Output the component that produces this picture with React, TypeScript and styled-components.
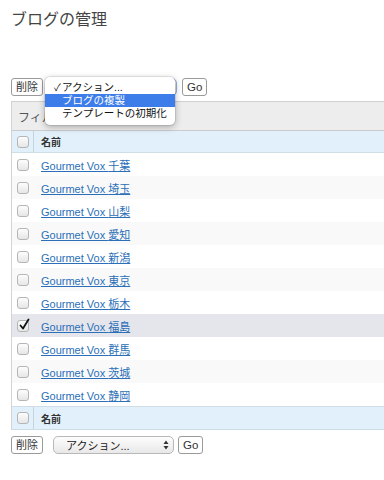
import React from 'react'
import styled, { createGlobalStyle } from 'styled-components'

const GlobalStyle = createGlobalStyle`
  html, body {
    margin: 0;
    padding: 0;
    background: #fff;
    overflow: hidden;
  }
  body {
    font-family: "Liberation Sans", "Noto Sans CJK JP", sans-serif;
    color: #333;
  }
`

const blogs = ['千葉', '埼玉', '山梨', '愛知', '新潟', '東京', '栃木', '福島', '群馬', '茨城', '静岡']
const checkedBlog = '福島'

const Page = styled.div`
  width: 384px;
  height: 480px;
  padding: 10px 0 0 11px;
  box-sizing: border-box;
`

const Title = styled.h1`
  margin: 0;
  font-size: 16px;
  font-weight: normal;
  line-height: 20px;
  color: #444;
`

const ActionBar = styled.div<{ $top?: boolean }>`
  position: relative;
  display: flex;
  align-items: center;
  height: 18px;
  margin: ${p => (p.$top ? '48px 0 5px' : '6px 0 0')};
`

const Button = styled.button`
  height: 18px;
  padding: 0 4px;
  border: 1px solid #9a9a9a;
  border-radius: 3px;
  background: #fff;
  font-family: "Liberation Sans", "Noto Sans CJK JP", sans-serif;
  font-size: 11px;
  color: #333;
  line-height: 16px;
`

const GoButton = styled(Button)`
  font-size: 11.5px;
`

const Select = styled.div<{ $open?: boolean }>`
  display: flex;
  align-items: center;
  justify-content: space-between;
  box-sizing: border-box;
  width: ${p => (p.$open ? '129px' : '121px')};
  height: 18px;
  margin: ${p => (p.$open ? '0 5px 0 5px' : '0 4px 0 10px')};
  padding: 0 4px 0 12px;
  border: 1px solid ${p => (p.$open ? '#8fb2e6' : '#b8b8b8')};
  border-radius: 5px;
  background: linear-gradient(#fdfdfd, #e8e8e8);
  font-size: 11px;
  color: #222;
`

const Arrows = styled.svg`
  width: 6px;
  height: 10px;
`

const Menu = styled.ul`
  position: absolute;
  left: 34px;
  top: -1px;
  z-index: 2;
  width: 130px;
  margin: 0;
  padding: 4px 0 5px;
  list-style: none;
  background: #fff;
  border-radius: 5px;
  box-shadow: 0 2px 7px rgba(0, 0, 0, 0.3), 0 0 0 1px rgba(0, 0, 0, 0.08);
`

const MenuItem = styled.li<{ $active?: boolean }>`
  display: flex;
  align-items: center;
  height: 13px;
  padding: 0 0 0 9px;
  font-size: 10.5px;
  line-height: 13px;
  white-space: nowrap;
  color: ${p => (p.$active ? '#fff' : '#111')};
  background: ${p => (p.$active ? '#3d7de9' : 'transparent')};
`

const Check = styled.span`
  display: inline-block;
  width: 8px;
  font-size: 10px;
`

const Table = styled.div`
  border-left: 1px solid #d4d4d4;
`

const FilterBar = styled.div`
  height: 28px;
  display: flex;
  align-items: center;
  padding-left: 6px;
  background: #ededed;
  border-top: 1px solid #d0d0d0;
  border-bottom: 1px solid #cbcbcb;
  font-size: 12px;
  color: #555;
`

type Variant = 'head' | 'foot' | 'odd' | 'even' | 'checked'

const Row = styled.div<{ $variant: Variant }>`
  display: flex;
  align-items: center;
  box-sizing: border-box;
  height: ${p => (p.$variant === 'head' ? '22px' : p.$variant === 'foot' ? '24px' : '23px')};
  background: ${p =>
    p.$variant === 'head' || p.$variant === 'foot'
      ? '#e1f0fa'
      : p.$variant === 'checked'
      ? '#e5e5ec'
      : p.$variant === 'even'
      ? '#f9f9f9'
      : '#fff'};
  border-top: ${p => (p.$variant === 'foot' ? '1px solid #cfdde6' : 'none')};
  border-bottom: ${p => (p.$variant === 'head' || p.$variant === 'foot' ? '1px solid #cfdde6' : 'none')};
`

const CheckCell = styled.div<{ $head?: boolean }>`
  width: 22px;
  height: 100%;
  display: flex;
  align-items: center;
  justify-content: center;
  border-right: ${p => (p.$head ? '1px solid #c8d4dc' : '1px solid transparent')};
  box-sizing: border-box;
`

const Box = styled.span`
  position: relative;
  width: 10px;
  height: 10px;
  border: 1px solid #b5b5b5;
  border-radius: 3px;
  background: linear-gradient(#fdfdfd, #e6e6e6);
`

const Tick = styled.svg`
  position: absolute;
  left: 0;
  top: -3px;
  width: 12px;
  height: 13px;
`

const NameCell = styled.div<{ $head?: boolean }>`
  padding-left: 7px;
  font-size: ${p => (p.$head ? '10px' : '11px')};
  font-weight: ${p => (p.$head ? 'bold' : 'normal')};
  color: #333;
`

const Link = styled.a`
  color: #2a6fb8;
  text-decoration: underline;
  font-size: 11px;
`

const CheckBox: React.FC<{ checked?: boolean }> = ({ checked }) => (
  <Box>
    {checked && (
      <Tick viewBox="0 0 12 13">
        <path d="M2.5 7.5 L5 10.5 L10.5 1.5" fill="none" stroke="#111" strokeWidth="1.8" strokeLinecap="round" strokeLinejoin="round" />
      </Tick>
    )}
  </Box>
)

const UpDown = () => (
  <Arrows viewBox="0 0 6 10">
    <path d="M3 0.5 L5.5 4 H0.5 Z M3 9.5 L5.5 6 H0.5 Z" fill="#333" />
  </Arrows>
)

const HeadRow: React.FC<{ foot?: boolean }> = ({ foot }) => (
  <Row $variant={foot ? 'foot' : 'head'}>
    <CheckCell $head>
      <CheckBox />
    </CheckCell>
    <NameCell $head>名前</NameCell>
  </Row>
)

const App: React.FC = () => (
  <Page>
    <GlobalStyle />
    <Title>ブログの管理</Title>
    <ActionBar $top>
      <Button>削除</Button>
      <Select $open>
        <span />
        <UpDown />
      </Select>
      <GoButton>Go</GoButton>
      <Menu>
        <MenuItem>
          <Check>✓</Check>アクション...
        </MenuItem>
        <MenuItem $active>
          <Check />ブログの複製
        </MenuItem>
        <MenuItem>
          <Check />テンプレートの初期化
        </MenuItem>
      </Menu>
    </ActionBar>
    <Table>
      <FilterBar>フィルタ</FilterBar>
      <HeadRow />
      {blogs.map((b, i) => (
        <Row key={b} $variant={b === checkedBlog ? 'checked' : i % 2 ? 'even' : 'odd'}>
          <CheckCell>
            <CheckBox checked={b === checkedBlog} />
          </CheckCell>
          <NameCell>
            <Link href="#">Gourmet Vox {b}</Link>
          </NameCell>
        </Row>
      ))}
      <HeadRow foot />
    </Table>
    <ActionBar>
      <Button>削除</Button>
      <Select>
        <span>アクション...</span>
        <UpDown />
      </Select>
      <GoButton>Go</GoButton>
    </ActionBar>
  </Page>
)

export default App
